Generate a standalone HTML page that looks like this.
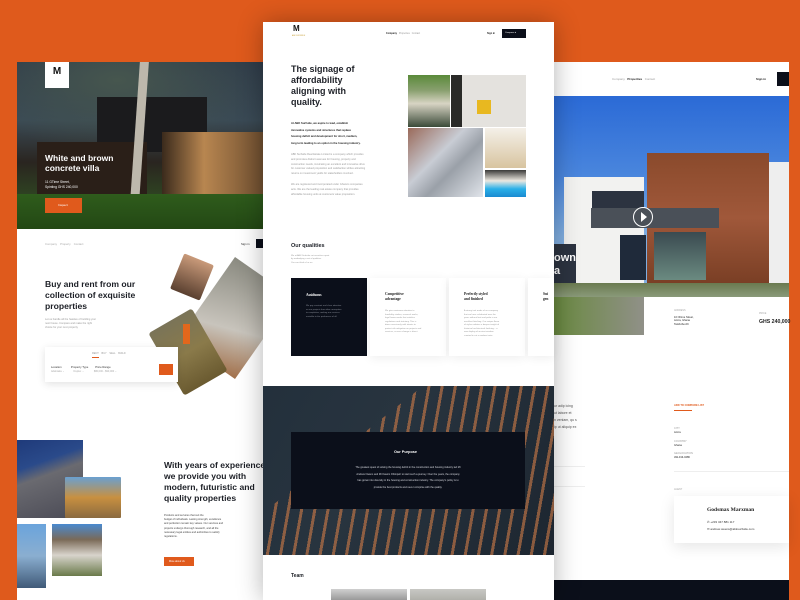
<!DOCTYPE html>
<html><head><meta charset="utf-8"><style>
*{margin:0;padding:0;box-sizing:border-box}
body{width:800px;height:600px;overflow:hidden;background:#df5a1c;font-family:"Liberation Sans",sans-serif;position:relative}
.abs{position:absolute}
.t{position:absolute;white-space:nowrap}
.g{color:#9a9a9a;font-size:2.6px;line-height:4.2px;position:absolute}
.d{color:#222;font-size:2.6px;line-height:4.2px;position:absolute}
.serif{font-family:"Liberation Serif",serif;font-weight:bold}
</style></head><body>

<!-- LEFT PAGE -->
<div class="abs" style="left:17px;top:62px;width:250px;height:538px;background:#fff;overflow:hidden">
  <div class="abs" style="left:0;top:0;width:250px;height:167px;background:linear-gradient(180deg,#2f3c4a 0%,#3a4a55 35%,#2a2520 60%,#2f4a22 85%,#24361a 100%);overflow:hidden">
    <div class="abs" style="left:0;top:0;width:250px;height:90px;background:radial-gradient(ellipse at 40% 20%,#46564e,transparent 70%)"></div>
    <div class="abs" style="left:80px;top:35px;width:110px;height:55px;background:#1b1b1d"></div>
    <div class="abs" style="left:145px;top:70px;width:105px;height:65px;background:linear-gradient(90deg,#3a2a1c,#b88650 40%,#6a4b2e)"></div>
    <div class="abs" style="left:20px;top:80px;width:110px;height:55px;background:#2a1f18"></div>
    <div class="abs" style="left:118px;top:-10px;width:9px;height:160px;background:#bdb8ac;transform:rotate(4deg)"></div>
    <div class="abs" style="left:0;top:132px;width:250px;height:35px;background:linear-gradient(180deg,#2f5c1c,#234814)"></div>
  </div>
  <div class="abs" style="left:28px;top:0;width:24px;height:26px;background:#fff;text-align:center;font-weight:bold;font-size:10px;color:#111;line-height:20px">M</div>
  <div class="t" style="left:28px;top:91px;color:#fff;font-weight:bold;font-size:8.5px;line-height:10px">White and brown<br>concrete villa</div>
  <div class="t" style="left:28px;top:118px;color:#fff;font-size:3.3px;line-height:5px">11 GTime Street,<br>Spinting GHS 240,000</div>
  <div class="abs" style="left:28px;top:136px;width:37px;height:15px;background:#e05a1c"></div>
  <div class="t" style="left:41px;top:141px;color:#fff;font-size:3px">Inspect</div>

  <div class="abs" style="left:159px;top:196px;width:32px;height:38px;background:linear-gradient(#c99a7a,#5a4030);transform:rotate(22deg);border-radius:2px"></div>
  <div class="abs" style="left:183px;top:206px;width:70px;height:100px;background:linear-gradient(160deg,#8a8a80,#c8c4bc 60%,#a2704a);transform:rotate(35deg)"></div>
  <div class="abs" style="left:146px;top:254px;width:50px;height:72px;background:linear-gradient(#7a7458,#8a7a4a,#6a5a30);transform:rotate(-30deg);border-radius:3px"></div>
  <div class="abs" style="left:166px;top:262px;width:7px;height:20px;background:#e2671c"></div>
</div>
<div class="t" style="left:45px;top:242px;color:#aaa;font-size:2.8px">Company &nbsp;&nbsp; Property &nbsp;&nbsp; Contact</div>
<div class="t" style="left:241px;top:242px;color:#222;font-size:2.8px">Sign in</div>
<div class="abs" style="left:256px;top:239px;width:10px;height:9px;background:#0b0f1a"></div>
<div class="t" style="left:45px;top:279px;color:#1c1f26;font-weight:bold;font-size:8.6px;line-height:11px">Buy and rent from our<br>collection of exquisite<br>properties</div>
<div class="g" style="left:45px;top:318px">Let us handle all the hassles of building your<br>next house. Compare and make the right<br>choice for your next property</div>
<div class="abs" style="left:45px;top:347px;width:133px;height:35px;background:#fff;box-shadow:0 2px 8px rgba(0,0,0,.12)"></div>
<div class="t" style="left:92px;top:352px;color:#999;font-size:2.5px">RENT &nbsp;&nbsp; BUY &nbsp;&nbsp; SELL &nbsp;&nbsp; BUILD</div>
<div class="abs" style="left:92px;top:357px;width:7px;height:1px;background:#e05a1c"></div>
<div class="t" style="left:51px;top:365px;color:#333;font-size:2.8px">Location &nbsp;&nbsp;&nbsp;&nbsp;&nbsp;&nbsp;&nbsp;&nbsp;&nbsp;&nbsp; Property Type &nbsp;&nbsp;&nbsp;&nbsp;&nbsp;&nbsp;&nbsp; Price Range</div>
<div class="t" style="left:51px;top:370px;color:#aaa;font-size:2.5px">Adabraka ⌄ &nbsp;&nbsp;&nbsp;&nbsp;&nbsp;&nbsp;&nbsp;&nbsp;&nbsp;&nbsp;&nbsp; Duplex ⌄ &nbsp;&nbsp;&nbsp;&nbsp;&nbsp;&nbsp;&nbsp;&nbsp;&nbsp;&nbsp;&nbsp;&nbsp; $80,000 - $90,000 ⌄</div>
<div class="abs" style="left:159px;top:364px;width:14px;height:11px;background:#e05a1c"></div>
<div class="abs" style="left:17px;top:440px;width:66px;height:78px;background:linear-gradient(160deg,#1f3a7a 0%,#2a4a8a 30%,#6a6a70 45%,#4a4a55 100%)"></div>
<div class="abs" style="left:65px;top:477px;width:56px;height:41px;background:linear-gradient(#6aa0d0,#c89040 50%,#8a6a40);border-radius:1px"></div>
<div class="abs" style="left:17px;top:524px;width:29px;height:64px;background:linear-gradient(#6aa4dc,#8aaed0 50%,#405a78)"></div>
<div class="abs" style="left:52px;top:524px;width:50px;height:52px;background:linear-gradient(#4a8ad0 0%,#7a6a58 30%,#d8d4cc 60%,#6a7a4a)"></div>
<div class="t" style="left:164px;top:460px;color:#1c1f26;font-weight:bold;font-size:8.6px;line-height:11px">With years of experience<br>we provide you with<br>modern, futuristic and<br>quality properties</div>
<div class="d" style="left:164px;top:514px;color:#444">Products and services that suit the<br>budget of individuals. Lasting strength, excellence<br>and perfection remain key values. Our services and<br>projects undergo thorough research, and all the<br>necessary legal entities and authorities to satisfy<br>regulations.</div>
<div class="abs" style="left:164px;top:557px;width:30px;height:9px;background:#e05a1c"></div>
<div class="t" style="left:169px;top:560px;color:#fff;font-size:2.4px">More about Us</div>

<!-- RIGHT PAGE -->
<div class="abs" style="left:540px;top:62px;width:249px;height:538px;background:#fff"></div>
<div class="t" style="left:612px;top:77px;color:#999;font-size:3px">Company &nbsp;&nbsp;<b style="color:#222">Properties</b> &nbsp;&nbsp;Contact</div>
<div class="t" style="left:756px;top:77px;color:#222;font-size:3px;font-weight:bold">Sign in</div>
<div class="abs" style="left:777px;top:72px;width:12px;height:14px;background:#0b0f1a"></div>
<div class="abs" style="left:540px;top:96px;width:249px;height:201px;background:linear-gradient(180deg,#2b6ad6 0%,#4a86dd 40%,#80aee0 70%)"></div>
<div class="abs" style="left:564px;top:177px;width:80px;height:110px;background:#f2f2f0"></div>
<div class="abs" style="left:647px;top:153px;width:122px;height:130px;background:linear-gradient(180deg,#8a4a2c,#a0583a 50%,#7a3f25)"></div>
<div class="abs" style="left:769px;top:162px;width:20px;height:125px;background:#eee"></div>
<div class="abs" style="left:591px;top:208px;width:128px;height:20px;background:#4a5058"></div>
<div class="abs" style="left:592px;top:191px;width:52px;height:17px;background:#2c3340"></div>
<div class="abs" style="left:654px;top:232px;width:52px;height:48px;background:linear-gradient(#3a4a50,#6a8a80)"></div>
<div class="abs" style="left:620px;top:235px;width:26px;height:45px;background:#1f2a3a"></div>
<div class="abs" style="left:554px;top:244px;width:22px;height:50px;background:#2c3340"></div>
<div class="abs" style="left:540px;top:283px;width:249px;height:14px;background:linear-gradient(#6a7a50,#8a9a7a)"></div>
<div class="abs" style="left:633px;top:207px;width:20px;height:20px;border:1.2px solid #fff;border-radius:50%"></div>
<div class="abs" style="left:641px;top:212px;width:0;height:0;border-left:6px solid #fff;border-top:5px solid transparent;border-bottom:5px solid transparent"></div>
<div class="t" style="left:554px;top:252px;color:#fff;font-weight:bold;font-size:11px;line-height:13px">own<br>a</div>
<div class="abs" style="left:554px;top:297px;width:90px;height:38px;background:linear-gradient(90deg,#6a8a40,#909088)"></div>
<div class="t" style="left:674px;top:309px;color:#aaa;font-size:2.4px">ADDRESS</div>
<div class="d" style="left:674px;top:316px;line-height:3.4px">10 Ohime Street,<br>Accra, Ghana<br>TatshoSe-09</div>
<div class="t" style="left:759px;top:312px;color:#aaa;font-size:2.4px">PRICE</div>
<div class="t" style="left:759px;top:319px;color:#222;font-size:5.2px;font-weight:bold">GHS 240,000</div>
<div class="d" style="left:554px;top:403px;font-size:3.5px;line-height:7px;color:#555">ur adip icing<br>ut labore et<br>n veniam, qu s<br>ip ut aliquip ex</div>
<div class="abs" style="left:554px;top:466px;width:31px;height:1px;background:#eee"></div>
<div class="abs" style="left:554px;top:486px;width:31px;height:1px;background:#eee"></div>
<div class="t" style="left:674px;top:404px;color:#e05a1c;font-size:2.6px;font-weight:bold">ADD TO COMPARE LIST</div>
<div class="abs" style="left:674px;top:410px;width:18px;height:.8px;background:#e05a1c"></div>
<div class="g" style="left:674px;top:427px;line-height:4.2px">CITY<br><span style="color:#222">Accra</span><br><br>COUNTRY<br><span style="color:#222">Ghana</span><br><br>GEOLOCATION<br><span style="color:#222">AW-013-0486</span></div>
<div class="abs" style="left:674px;top:471px;width:115px;height:.8px;background:#eee"></div>
<div class="t" style="left:674px;top:488px;color:#aaa;font-size:2.4px">AGENT</div>
<div class="abs" style="left:674px;top:496px;width:115px;height:47px;background:#fff;box-shadow:0 4px 14px rgba(0,0,0,.1)"></div>
<div class="t serif" style="left:707px;top:507px;color:#222;font-size:5.5px">Godsmax Marxman</div>
<div class="t" style="left:707px;top:519px;color:#333;font-size:3px;line-height:6.5px">✆ +233 347 881 117<br>✉ andrew.owens@abksurfside.com</div>
<div class="abs" style="left:540px;top:580px;width:249px;height:20px;background:#0b0f1a"></div>

<!-- CENTER PAGE -->
<div class="abs" style="left:263px;top:22px;width:291px;height:578px;background:#fff;box-shadow:0 0 24px rgba(0,0,0,.3)"></div>
<div class="t" style="left:293px;top:24px;color:#111;font-weight:bold;font-size:8px">M</div>
<div class="t" style="left:292px;top:35px;color:#c8a23c;font-size:1.8px">ABK SURFSIDE</div>
<div class="t" style="left:386px;top:32px;color:#999;font-size:2.4px"><b style="color:#222">Company</b> &nbsp;&nbsp;Properties &nbsp;&nbsp;Contact</div>
<div class="t" style="left:487px;top:32px;color:#222;font-size:2.4px;font-weight:bold">Sign in</div>
<div class="abs" style="left:502px;top:29px;width:24px;height:9px;background:#0b0f1a"></div>
<div class="t" style="left:505px;top:32px;color:#fff;font-size:2.2px">Compare ●</div>
<div class="t" style="left:291px;top:64px;color:#1c1f26;font-weight:bold;font-size:9px;line-height:11px">The signage of<br>affordability<br>aligning with<br>quality.</div>
<div class="d" style="left:291px;top:121px;font-weight:bold;line-height:6.5px;font-size:2.7px">At ABK Surfside, we aspire to lead, establish<br>innovative systems and structures that replace<br>housing deficit and development for short, medium,<br>long term leading to an option in the housing industry.</div>
<div class="g" style="left:291px;top:153px;line-height:4.8px">ABK Surfside Real Estate Limited is a company which provides<br>and promotes distinct avenues for housing, property and<br>construction needs, inculcating an excellent and innovative drive<br>for customer valued proposition and satisfaction whiles attracting<br>returns on investment yields for stakeholders involved.</div>
<div class="g" style="left:291px;top:183px;line-height:4.8px">We are registered and incorporated under Ghana's companies<br>acts. We are the leading real estate company that provides<br>affordable housing units at customers value proposition.</div>
<div class="abs" style="left:408px;top:75px;width:42px;height:52px;background:linear-gradient(#5a8a3a 0%,#8aa070 30%,#d8d4c4 55%,#3a4a38)"></div>
<div class="abs" style="left:451px;top:75px;width:75px;height:52px;background:linear-gradient(90deg,#2a2a28 0 15%,#e4e2de 15%)"></div>
<div class="abs" style="left:477px;top:100px;width:14px;height:14px;background:#e8b820"></div>
<div class="abs" style="left:408px;top:128px;width:75px;height:69px;background:linear-gradient(135deg,#9a6a5a 0%,#c8ccd4 40%,#9aa0a8 60%,#e0e4ea)"></div>
<div class="abs" style="left:485px;top:128px;width:41px;height:40px;background:linear-gradient(#f4f0e8,#d8c4a0)"></div>
<div class="abs" style="left:485px;top:170px;width:41px;height:27px;background:linear-gradient(#3a3a38 0%,#ece8e0 40%,#2ab0e8 70%,#1a8ad0)"></div>
<div class="t" style="left:291px;top:243px;color:#1c1f26;font-weight:bold;font-size:5.5px">Our qualities</div>
<div class="g" style="left:291px;top:255px;font-size:2.2px;line-height:3.3px">We at ABK Surfside set ourselves apart<br>by embodying a set of qualities.<br>You can think of us as:</div>
<div class="abs" style="left:291px;top:278px;width:76px;height:78px;background:#0b0f1a"></div>
<div class="t serif" style="left:306px;top:293px;color:#fff;font-size:3.6px">Assiduous</div>
<div class="g" style="left:306px;top:305px;font-size:2.2px;line-height:3.5px;color:#8a8e98">We pay constant and close attention<br>on our projects from idea conception<br>to completion, making our services<br>enviable to the preference of all.</div>
<div class="abs" style="left:370px;top:278px;width:76px;height:78px;background:#fff;box-shadow:0 2px 10px rgba(0,0,0,.07)"></div>
<div class="t serif" style="left:385px;top:292px;color:#222;font-size:3.6px;line-height:5px">Competitive<br>advantage</div>
<div class="g" style="left:385px;top:310px;font-size:2.2px;line-height:3.5px">We give maximum attention to<br>feasibility studies, research works,<br>legal frame works that satisfies<br>regulations and statutory. This is<br>done consciously with intents to<br>protect risk mitigation on projects and<br>services, so zero change is direct.</div>
<div class="abs" style="left:449px;top:278px;width:76px;height:78px;background:#fff;box-shadow:0 2px 10px rgba(0,0,0,.07)"></div>
<div class="t serif" style="left:464px;top:292px;color:#222;font-size:3.6px;line-height:5px">Perfectly styled<br>and finished</div>
<div class="g" style="left:464px;top:310px;font-size:2.2px;line-height:3.5px">A strong trait made of our company<br>that we have celebrated over the<br>years without limit and pride in our<br>excellent finishing. Our unique flavor<br>of styles radiates a deeper insight of<br>historical architectural finishing... a<br>new display of ancient wisdom<br>created in cut a modern taste.</div>
<div class="abs" style="left:528px;top:278px;width:26px;height:78px;background:#fff;box-shadow:0 2px 10px rgba(0,0,0,.07)"></div>
<div class="t serif" style="left:543px;top:292px;color:#222;font-size:3.6px;line-height:5px">Sui<br>gen</div>
<div class="abs" style="left:263px;top:386px;width:291px;height:169px;background:linear-gradient(120deg,#23303c 0%,#28343f 40%,#1d2630 100%)"></div>
<div class="abs" style="left:263px;top:386px;width:291px;height:169px;background:repeating-linear-gradient(100deg,transparent 0 6px,rgba(200,120,70,.75) 6px 9px,transparent 9px 13px);clip-path:polygon(0 100%,0 75%,55% 0,100% 0,100% 100%);opacity:.85"></div>
<div class="abs" style="left:291px;top:432px;width:234px;height:77px;background:#0b0f1a"></div>
<div class="t" style="left:394px;top:450px;color:#fff;font-weight:bold;font-size:3.8px">Our Purpose</div>
<div class="abs" style="left:291px;top:465px;width:234px;text-align:center;color:#d8dae0;font-size:2.5px;line-height:6.6px">The greatest quest of solving the housing deficit in the construction and housing industry led Mr<br>Andrew Owens and Mr Kasom Obimpeh to start such a journey. Over the years, the company<br>has grown into diversity in the housing and construction industry. The company's policy is to<br>provide the best products and never comprise with the quality.</div>
<div class="t" style="left:291px;top:573px;color:#1c1f26;font-weight:bold;font-size:5px">Team</div>
<div class="abs" style="left:331px;top:589px;width:76px;height:11px;background:linear-gradient(#d0d0d0,#9a9a9a)"></div>
<div class="abs" style="left:410px;top:589px;width:76px;height:11px;background:linear-gradient(#c8c8c4,#b0b0aa)"></div>
</body></html>
